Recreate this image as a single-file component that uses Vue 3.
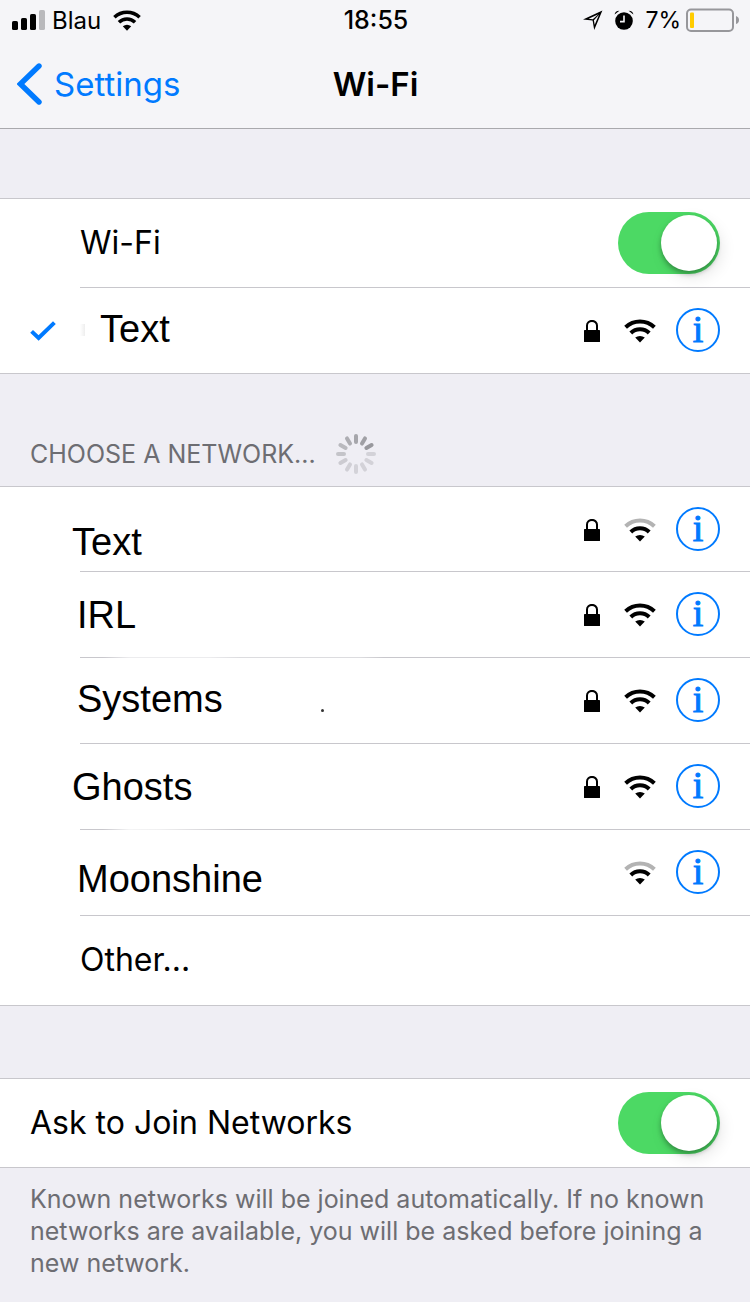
<script setup>
import { ref } from 'vue'

const wifiOn = ref(true)
const askToJoin = ref(true)

const networks = [
  { name: 'Text', locked: true, weak: true, place: 'lowest wide' },
  { name: 'IRL', locked: true, weak: false, place: '', line: 'faded-long' },
  { name: 'Systems', locked: true, weak: false, place: 'high', dot: true },
  { name: 'Ghosts', locked: true, weak: false, place: 'wide', line: 'faded-short' },
  { name: 'Moonshine', locked: false, weak: true, place: 'low' },
]

const spokes = [
  '#a6a6ab', '#a0a0a5', '#98989d', '#d3d2d8', '#d3d2d8', '#d3d2d8',
  '#d3d2d8', '#d0cfd5', '#cccbd1', '#c4c4c9', '#b9b9be', '#adadb2',
]
</script>

<template>
  <div class="screen">
    <svg class="symbols" width="0" height="0" aria-hidden="true">
      <symbol id="wifi" viewBox="0 0 32 24">
        <path d="M1.6 8.2 A21 21 0 0 1 30.4 8.2" fill="none" stroke-width="4" />
        <path d="M6.8 14 A13 13 0 0 1 25.2 14" fill="none" stroke="#000" stroke-width="4" />
        <path d="M11.2 18.6 A7 5.6 0 0 1 20.8 18.6 L16 23.6 Z" fill="#000" stroke="none" />
      </symbol>
      <symbol id="lock" viewBox="0 0 16 22">
        <path d="M3 11 V5.6 a5 4.7 0 0 1 10 0 V11" fill="none" stroke="#000" stroke-width="2" />
        <rect y="10" width="16" height="12" rx="0.6" />
      </symbol>
    </svg>

    <header class="top">
      <div class="status">
        <div class="status-left">
          <svg width="33" height="20" viewBox="0 0 33 20" aria-hidden="true">
            <rect x="0" y="11" width="6" height="9" rx="1.6" />
            <rect x="9" y="8" width="6" height="12" rx="1.6" />
            <rect x="18" y="4" width="6" height="16" rx="1.6" />
            <rect x="27" y="0" width="6" height="20" rx="1.6" fill="#b9b9bc" />
          </svg>
          <span class="carrier">Blau</span>
          <svg class="wifi" width="28" height="21" aria-hidden="true"><use href="#wifi" /></svg>
        </div>
        <time>18:55</time>
        <div class="status-right">
          <svg width="20" height="20" viewBox="0 0 20 20" aria-hidden="true">
            <path fill-rule="evenodd" d="M19.4 0.6 L0 9.6 L9.6 10.6 L11.2 20 Z M15.4 4.2 L9.8 9.2 L5.6 8.8 Z M16 4.8 L10.9 10.2 L11.7 14.8 Z" />
          </svg>
          <svg width="20" height="20" viewBox="0 0 20 20" aria-hidden="true">
            <circle cx="10" cy="11" r="8.8" />
            <path d="M0.6 4.6 Q1 0.8 5.4 0.8 Z M19.4 4.6 Q19 0.8 14.6 0.8 Z" />
            <path d="M10 5.6 V11.6 H6" fill="none" stroke="#f5f5f8" stroke-width="1.6" />
          </svg>
          <span class="charge">7%</span>
          <svg width="54" height="24" viewBox="0 0 54 24" aria-hidden="true">
            <rect x="1" y="1.5" width="46" height="21.5" rx="4" fill="none" stroke="#97979b" stroke-width="2" />
            <rect x="4" y="4.5" width="4" height="15.5" rx="1" fill="#ffcc00" />
            <path d="M50 8 Q53 9 53 12 Q53 15 50 16 Z" fill="#97979b" />
          </svg>
        </div>
      </div>
      <nav class="nav">
        <a class="back" href="#">
          <svg width="25" height="42" viewBox="0 0 25 42" aria-hidden="true">
            <path d="M22 3 L3.4 21 L22 39" fill="none" stroke="#007aff" stroke-width="5.4" stroke-linecap="round" stroke-linejoin="miter" />
          </svg>
          <span>Settings</span>
        </a>
        <h1>Wi-Fi</h1>
      </nav>
    </header>

    <main>
      <section class="group first">
        <div class="row tall">
          <label class="title" for="wifi-switch">Wi-Fi</label>
          <input id="wifi-switch" v-model="wifiOn" class="switch" type="checkbox" role="switch" />
        </div>
        <div class="connected">
          <svg class="check" width="26" height="20" viewBox="0 0 26 20" aria-hidden="true">
            <path d="M1.6 10.4 L8.6 17 L24.4 1.6" fill="none" stroke="#007aff" stroke-width="4" />
          </svg>
          <div class="row last">
            <span class="smudge" aria-hidden="true"></span>
            <button class="name high" type="button">Text</button>
            <svg width="16" height="22" aria-hidden="true"><use href="#lock" /></svg>
            <svg class="wifi" width="32" height="24" aria-hidden="true"><use href="#wifi" /></svg>
            <button class="info" type="button" aria-label="Details for Text">i</button>
          </div>
        </div>
      </section>

      <div class="choose">
        <h2>CHOOSE A NETWORK...</h2>
        <svg width="40" height="40" viewBox="-20 -20 40 40" aria-hidden="true">
          <line
            v-for="(color, i) in spokes"
            :key="i"
            y1="-18"
            y2="-12"
            :stroke="color"
            stroke-width="4"
            stroke-linecap="round"
            :transform="`rotate(${i * 30})`"
          />
        </svg>
      </div>

      <section class="group networks">
        <div v-for="n in networks" :key="n.name" class="row" :class="n.line">
          <button class="name" :class="n.place" type="button">
            {{ n.name }}<span v-if="n.dot" class="dot" aria-hidden="true"></span>
          </button>
          <svg v-if="n.locked" width="16" height="22" aria-hidden="true"><use href="#lock" /></svg>
          <svg class="wifi" :class="{ weak: n.weak }" width="32" height="24" aria-hidden="true"><use href="#wifi" /></svg>
          <button class="info" type="button" :aria-label="`Details for ${n.name}`">i</button>
        </div>
        <div class="row tall last">
          <button class="title" type="button">Other...</button>
        </div>
      </section>

      <section class="group ask">
        <div class="row tall last full">
          <label class="title" for="ask-switch">Ask to Join Networks</label>
          <input id="ask-switch" v-model="askToJoin" class="switch" type="checkbox" role="switch" />
        </div>
      </section>
      <p class="note">
        Known networks will be joined automatically. If no known networks are available, you will be asked before joining a new network.
      </p>
    </main>
  </div>
</template>

<style>
body {
  margin: 0;
  background: #efeef4;
}
</style>

<style scoped>
.screen {
  min-height: 100vh;
  background: #efeef4;
  color: #000;
  font-family: Inter, "Liberation Sans", sans-serif;
}
.symbols {
  position: absolute;
}
svg {
  flex: none;
  display: block;
}
button {
  padding: 0;
  border: 0;
  background: none;
  color: inherit;
  font: inherit;
  text-align: left;
  cursor: pointer;
}
.wifi {
  stroke: #000;
}
.wifi.weak {
  stroke: #b3b3b3;
}
.top {
  background: #f5f5f8;
  border-bottom: 1px solid #a9a9ad;
}
.status {
  display: grid;
  grid-template-columns: 1fr auto 1fr;
  align-items: center;
  height: 40px;
  padding: 0 10px 0 12px;
  font-size: 24px;
}
.status-left,
.status-right {
  display: flex;
  align-items: center;
}
.carrier {
  margin: 0 12px 0 7px;
}
.status time {
  font-size: 25px;
  font-weight: 500;
}
.status-right {
  justify-content: flex-end;
  gap: 11px;
}
.charge {
  margin-right: -6px;
  font-size: 23px;
}
.nav {
  display: grid;
  grid-template-columns: 1fr auto 1fr;
  align-items: center;
  height: 88px;
  padding: 0 16px 0 17px;
}
.back {
  display: flex;
  align-items: center;
  gap: 12px;
  color: #007aff;
  font-size: 33px;
  text-decoration: none;
}
h1 {
  margin: 0;
  font-size: 33px;
  font-weight: 600;
}
.group {
  background: #fff;
  border-top: 1px solid #c8c7cc;
  border-bottom: 1px solid #c8c7cc;
}
.group.first {
  margin-top: 69px;
}
.row {
  display: flex;
  align-items: center;
  gap: 24px;
  height: 84px;
  margin-left: 80px;
  padding: 0 30px 1px 0;
  border-bottom: 1px solid #c8c7cc;
}
.row svg {
  margin-top: 2px;
}
.row.tall {
  height: 88px;
  padding-bottom: 0;
}
.row.last {
  border-bottom: 0;
}
.row.full {
  margin-left: 30px;
}
.networks .row:first-child {
  height: 83px;
}
.networks .row.tall {
  height: 89px;
}
.row.faded-long {
  border-image: linear-gradient(90deg, #c8c7cc 24px, #ececee 50px, #ececee 130px, #dcdcdf 160px, #dcdcdf 280px, #c8c7cc 304px) 1;
}
.row.faded-short {
  border-image: linear-gradient(90deg, #c8c7cc 24px, #f4f4f5 50px, #f0f0f1 80px, #c8c7cc 160px) 1;
}
.title {
  flex: 1;
  padding-bottom: 1px;
  font-size: 32px;
  line-height: 40px;
}
.name {
  flex: 1;
  display: flex;
  align-items: baseline;
  margin-left: -3px;
  padding-top: 2px;
  font-family: "Liberation Sans", Arial, sans-serif;
  font-size: 38px;
  line-height: 44px;
}
.name.wide {
  margin-left: -8px;
}
.name.high {
  padding: 0 0 2px;
}
.name.low {
  padding-top: 14px;
}
.name.lowest {
  padding-top: 26px;
}
.dot {
  width: 3px;
  height: 3px;
  margin-left: 98px;
  border-radius: 50%;
  background: #333;
}
.info {
  box-sizing: border-box;
  flex: none;
  width: 44px;
  height: 44px;
  margin-left: -4px;
  border: 2px solid #007aff;
  border-radius: 50%;
  color: #007aff;
  font-family: "Liberation Serif", serif;
  font-size: 38px;
  line-height: 38px;
  text-align: center;
  padding-bottom: 2px;
  -webkit-text-stroke: 1px #007aff;
}
.connected {
  display: flex;
  align-items: center;
}
.connected .row {
  flex: 1;
  margin-left: 24px;
}
.check {
  margin-left: 30px;
}
.smudge {
  width: 5px;
  height: 12px;
  margin-right: -6px;
  background: linear-gradient(90deg, #fff, #eee);
}
.switch {
  appearance: none;
  flex: none;
  width: 102px;
  height: 62px;
  margin: 0;
  padding: 3px;
  box-sizing: border-box;
  display: flex;
  border-radius: 31px;
  background: #d8d8dc;
  cursor: pointer;
}
.switch:checked {
  justify-content: flex-end;
  background: #4cd964;
}
.switch::before {
  content: "";
  width: 56px;
  height: 56px;
  border-radius: 50%;
  background: #fff;
  box-shadow: 0 3px 5px rgba(0, 0, 0, 0.3), 4px 6px 16px rgba(0, 0, 0, 0.1);
}
.choose {
  display: flex;
  align-items: flex-end;
  gap: 20px;
  height: 100px;
  padding: 0 30px 12px;
}
.choose h2 {
  margin: 0;
  color: #6d6d72;
  font-size: 25px;
  font-weight: 400;
  line-height: 40px;
}
.ask {
  margin-top: 72px;
}
.note {
  margin: 0;
  padding: 15px 30px 24px;
  color: #6d6d72;
  font-size: 25px;
  line-height: 32px;
}
</style>
